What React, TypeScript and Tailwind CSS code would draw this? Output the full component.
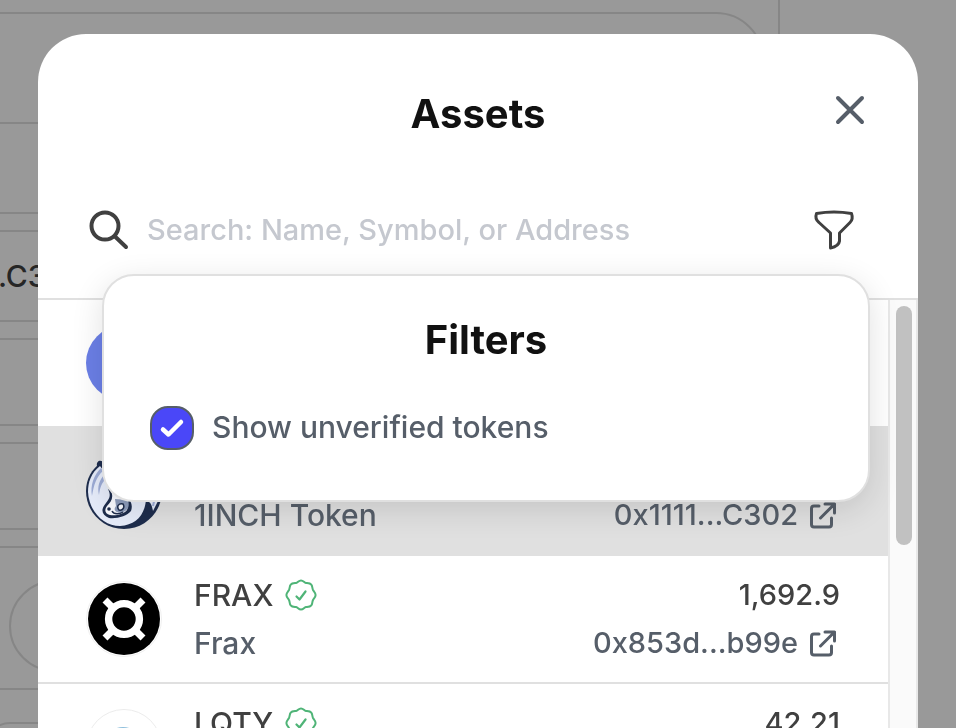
import type { ReactNode } from "react";

type Token = {
  id: string;
  logo: ReactNode;
  symbol?: string;
  name?: string;
  balance?: string;
  address?: string;
  active?: boolean;
};

function EthLogo() {
  return (
    <svg viewBox="0 0 76 76" className="size-19" aria-hidden="true">
      <circle cx="38" cy="38" r="38" fill="#6b7fe6" />
    </svg>
  );
}

function InchLogo() {
  return (
    <svg viewBox="0 0 76 76" className="size-19" aria-hidden="true">
      <path d="M16 9 C5 16 0 27 0 38 C0 59 17 76 38 76 C59 76 76 59 76 38 L60 20 L30 10Z" fill="#1e2d4d" />
      <path d="M14 13 C5 20 2 29 2 39 C3 58 17 73 34 73 C50 72 59 62 60 46 L50 24 L24 10Z" fill="#e6ecfa" />
      <path d="M11 13 C10 8 15 6 18 10 L17 17 L14 13Z" fill="#1e2d4d" />
      <path d="M15 15 C8 22 4 32 6 43 C8 32 10 24 17 18Z" fill="#9dacd6" />
      <path d="M19 21 C13 27 11 34 13 42 C14 34 16 29 21 25Z" fill="#9dacd6" />
      <path d="M22 36 C25 42 24 45 20 50 C14 57 16 62 23 65 C31 66 41 63 45 58 C47 52 45 48 41 44Z" fill="#1e2d4d" />
      <path d="M25 38 C28 45 25 49 21 53 C18 57 19 61 24 62 C30 63 38 61 41 57 C43 52 41 48 37 45Z" fill="#f9faff" />
      <path d="M29 46 L42 47 C44 53 42 58 35 60 C29 59 27 57 30 53Z" fill="#8d9cbb" />
      <path d="M33 57 C30 53 33 50 37 51 C39 54 37 58 33 57Z" fill="#f9faff" stroke="#1e2d4d" strokeWidth="1.5" />
      <path d="M26 58 C28 62 34 61 37 59" fill="none" stroke="#1e2d4d" strokeWidth="1.5" />
      <circle cx="23" cy="56" r="1.8" fill="#1e2d4d" />
      <path d="M63 44 L75 42 L67 58 C66 53 65 50 63 49Z" fill="#e6ecfa" />
      <path d="M69 44 L67 53" stroke="#9dacd6" strokeWidth="2" />
    </svg>
  );
}

function FraxLogo() {
  return (
    <svg viewBox="0 0 76 76" className="size-19" aria-hidden="true">
      <circle cx="38" cy="38" r="37.5" fill="#fff" stroke="#efefef" />
      <circle cx="38" cy="38" r="36" fill="#000" />
      <circle cx="38" cy="38" r="15.4" fill="none" stroke="#fff" strokeWidth="7.4" />
      <path d="M19 19 L28 28 M57 19 L48 28 M19 57 L28 48 M57 57 L48 48" stroke="#fff" strokeWidth="7" />
    </svg>
  );
}

function LqtyLogo() {
  return (
    <svg viewBox="0 0 76 76" className="size-19" aria-hidden="true">
      <circle cx="38" cy="38" r="37.5" fill="#fff" stroke="#ececec" />
      <circle cx="37" cy="38" r="20" fill="#8ebfdc" />
    </svg>
  );
}

function VerifiedBadge() {
  return (
    <svg viewBox="0 0 32 32" className="size-8" fill="none" stroke="#4fb477" strokeLinecap="round" strokeLinejoin="round" role="img" aria-label="Verified">
      <path
        strokeWidth="2"
        d="M16 1.5 C18.5 1.5 19 3.6 21 4 C23 4.2 25 4 26.3 5.7 C27.6 7.3 27 9 28 11 C29 12.8 30.6 13.6 30.6 16 C30.6 18.4 29 19.2 28 21 C27 23 27.6 24.7 26.3 26.3 C25 28 23 27.8 21 28 C19 28.4 18.5 30.5 16 30.5 C13.5 30.5 13 28.4 11 28 C9 27.8 7 28 5.7 26.3 C4.4 24.7 5 23 4 21 C3 19.2 1.4 18.4 1.4 16 C1.4 13.6 3 12.8 4 11 C5 9 4.4 7.3 5.7 5.7 C7 4 9 4.2 11 4 C13 3.6 13.5 1.5 16 1.5Z"
      />
      <path strokeWidth="2.2" d="M11.5 17.5 L14.5 20.5 L20.5 12.5" />
    </svg>
  );
}

function ExternalIcon() {
  return (
    <svg viewBox="0 0 26 28" className="h-7 w-[26px]" fill="none" stroke="currentColor" strokeWidth="3" strokeLinecap="round" strokeLinejoin="round" aria-hidden="true">
      <path d="M9 5 H4 Q1.500 5 1.500 7.500 V23.500 Q1.500 26 4 26 H19 Q21.500 26 21.500 23.500 V17" />
      <path d="M15 3 H24.500 V12 M24.500 3 L10.500 17" />
    </svg>
  );
}

const tokens: Token[] = [
  { id: "eth", logo: <EthLogo /> },
  { id: "1inch", logo: <InchLogo />, name: "1INCH Token", address: "0x1111...C302", active: true },
  { id: "frax", logo: <FraxLogo />, symbol: "FRAX", name: "Frax", balance: "1,692.9", address: "0x853d...b99e" },
  { id: "lqty", logo: <LqtyLogo />, symbol: "LQTY", balance: "42.21" },
];

function TokenRow({ token }: { token: Token }) {
  return (
    <li className={token.active ? "border-b-2 border-[#e0e0e0] bg-[#e0e0e0]" : "border-b-2 border-[#e0e0e0] bg-white"}>
      <div className="flex h-[126px] items-center gap-8 px-12">
        {token.logo}
        <div className="flex-1">
          <div className="flex h-12 items-center gap-3 text-[#404040]">
            {token.symbol && <span>{token.symbol}</span>}
            {token.symbol && <VerifiedBadge />}
          </div>
          <div className="h-12 leading-12">{token.name}</div>
        </div>
        <div className="text-right text-[29px]">
          <div className="h-12 leading-12 text-[#404040]">{token.balance}</div>
          <div className="h-12">
            {token.address && (
              <a href={`#${token.id}`} className="flex h-12 items-center gap-3 pr-1">
                {token.address}
                <ExternalIcon />
              </a>
            )}
          </div>
        </div>
      </div>
    </li>
  );
}

function Backdrop() {
  return (
    <div className="h-screen overflow-hidden bg-white text-[30px] text-[#404040]" aria-hidden="true">
      <div className="mr-[176px] h-full border-r-2 border-[#e0e0e0] pt-3">
        <div className="mr-3.5 -ml-16 h-[900px] rounded-t-[48px] border-2 border-[#e0e0e0]">
          <div className="h-[110px] border-b-2 border-[#e0e0e0]" />
          <div className="h-[90px] border-b-2 border-[#e0e0e0]" />
          <div className="mt-4 flex h-[92px] items-center border-y-2 border-[#e0e0e0] pl-[60px]">.C302</div>
          <div className="mt-4 h-[88px] border-y-2 border-[#e0e0e0]" />
          <div className="mt-4 h-[88px] border-y-2 border-[#e0e0e0]" />
          <div className="mt-4 h-[144px] border-y-2 border-[#e0e0e0] pt-8 pl-[71px]">
            <div className="h-[92px] w-[200px] rounded-full border-2 border-[#e0e0e0]" />
          </div>
          <div className="mt-8 ml-12 h-20 rounded-3xl border-2 border-[#e0e0e0]" />
        </div>
      </div>
    </div>
  );
}

function FilterPanel() {
  return (
    <section
      aria-label="Filters"
      className="absolute top-[240px] right-12 left-16 rounded-[32px] border-2 border-[#e0e0e0] bg-white px-[46px] pt-[38px] pb-[50px] shadow-[0_8px_32px_rgba(0,0,0,0.12)]"
    >
      <h2 className="text-center text-[40px] leading-[52px] font-bold text-[#111]">Filters</h2>
      <label className="mt-[39px] flex items-center gap-[18px]">
        <span className="grid size-11">
          <input type="checkbox" defaultChecked className="peer col-start-1 row-start-1 size-11 appearance-none rounded-[18px] border-2 border-[#565e69] bg-white checked:bg-[#4a47f8]" />
          <svg
            viewBox="0 0 44 44"
            className="pointer-events-none invisible col-start-1 row-start-1 size-11 peer-checked:visible"
            fill="none"
            stroke="#fff"
            strokeWidth="4.500"
            strokeLinecap="round"
            strokeLinejoin="round"
            aria-hidden="true"
          >
            <path d="M13 23.500 L18.500 28.500 L31 16" />
          </svg>
        </span>
        Show unverified tokens
      </label>
    </section>
  );
}

export default function App() {
  return (
    <div className="font-['Inter','Liberation_Sans',sans-serif] font-medium">
      <Backdrop />
      <div className="fixed inset-0 overflow-hidden bg-black/40 px-[38px] pt-[34px]">
        <div role="dialog" aria-label="Assets" className="relative flex h-screen flex-col overflow-hidden rounded-t-[48px] bg-white text-[30px] text-[#565e69]">
          <header className="grid grid-cols-[1fr_auto_1fr] items-center px-12 pt-[50px]">
            <h1 className="col-start-2 text-[40px] leading-[60px] font-bold text-[#111]">Assets</h1>
            <button type="button" aria-label="Close" className="-mt-2 justify-self-end">
              <svg viewBox="0 0 40 40" className="size-10" fill="none" stroke="currentColor" strokeWidth="4" strokeLinecap="round">
                <path d="M8 8 L32 32 M32 8 L8 32" />
              </svg>
            </button>
          </header>
          <div className="mt-[46px] flex h-20 items-center px-12">
            <svg viewBox="0 0 44 44" className="size-11" fill="none" stroke="#404040" strokeWidth="4" strokeLinecap="round" aria-hidden="true">
              <circle cx="19" cy="18" r="13.500" />
              <path d="M29 28.500 L40 39" />
            </svg>
            <input
              type="text"
              aria-label="Search tokens"
              placeholder="Search: Name, Symbol, or Address"
              className="ml-[17px] min-w-0 flex-1 text-[29px] outline-none placeholder:text-[#c5c8cf]"
            />
            <button type="button" aria-label="Filter" className="mr-3.5">
              <svg viewBox="0 0 44 44" className="size-11" fill="none" stroke="#404040" strokeWidth="3" strokeLinecap="round" strokeLinejoin="round">
                <path d="M4.500 5.500 Q22 2.500 39.500 5.500 Q41.500 11 38 14.500 L27.500 25 V33 Q27 38 18.500 40 V25 L7 14.500 Q2.500 11 4.500 5.500Z" />
              </svg>
            </button>
          </div>
          <div className="mt-[28px] flex min-h-0 flex-1 border-t-2 border-[#e0e0e0]">
            <ul className="min-w-0 flex-1">
              {tokens.map((token) => (
                <TokenRow key={token.id} token={token} />
              ))}
            </ul>
            <div className="w-[30px] border-x-2 border-[#e8e8e8] bg-[#fafafa] px-[6px] pt-[6px]" aria-hidden="true">
              <div className="h-[239px] w-4 rounded-full bg-[#c1c1c1]" />
            </div>
          </div>
          <FilterPanel />
        </div>
      </div>
    </div>
  );
}
